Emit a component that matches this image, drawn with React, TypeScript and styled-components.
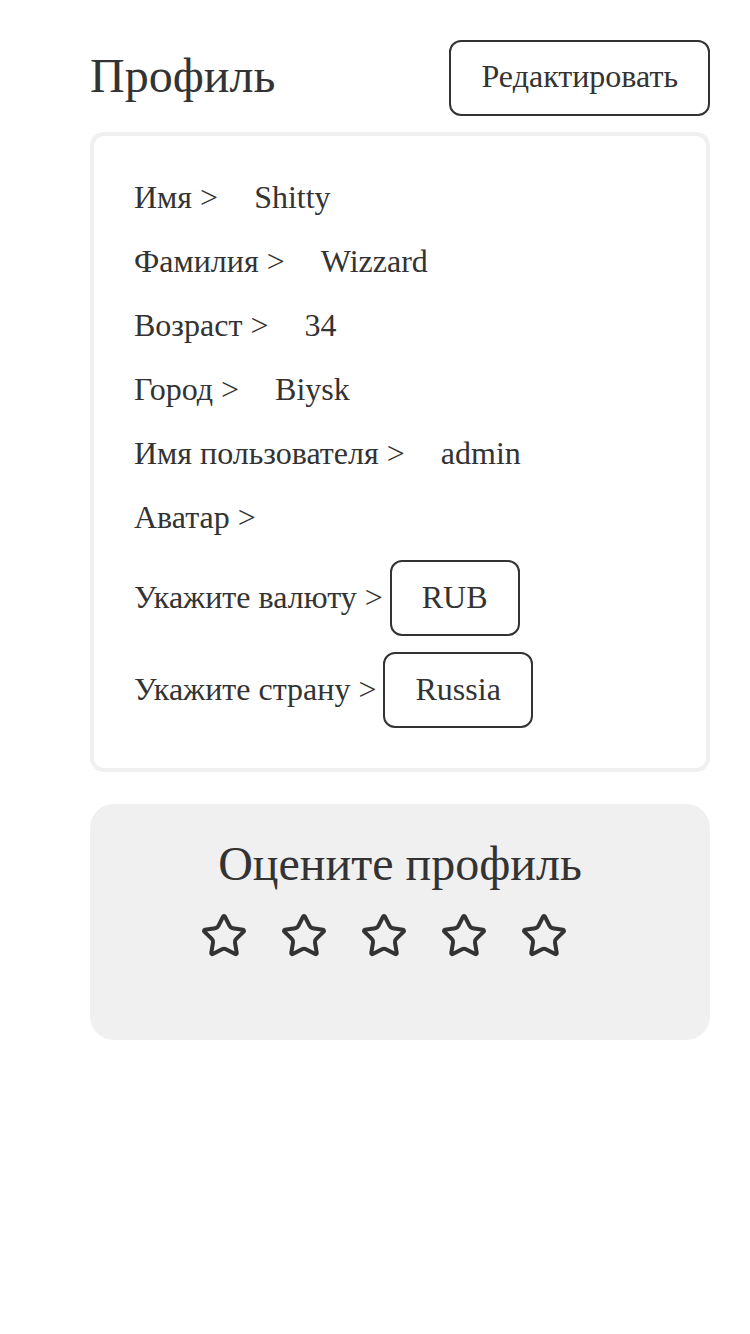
import React from "react";
import styled, { createGlobalStyle } from "styled-components";
import { Star } from "lucide-react";

const GlobalStyle = createGlobalStyle`
  html, body { margin: 0; padding: 0; background: #fff; }
  body { font-family: "Liberation Serif", "Times New Roman", serif; color: #333; }
  * { box-sizing: border-box; }
`;

const Page = styled.div`
  padding: 40px 40px 0 90px;
  display: flex;
  flex-direction: column;
`;

const Header = styled.div`
  display: flex;
  justify-content: space-between;
  align-items: center;
  height: 76px;
  margin-bottom: 16px;
`;

const Title = styled.h1`
  margin: 0;
  font-size: 48px;
  font-weight: 400;
  line-height: 1;
  padding-bottom: 4px;
`;

const OutlineButton = styled.button`
  font-family: inherit;
  font-size: 32px;
  color: #333;
  background: transparent;
  border: 2px solid #333;
  border-radius: 12px;
  height: 76px;
  padding: 0 30px 4px;
  cursor: pointer;
`;

const Card = styled.div`
  border: 4px solid #f0f0f0;
  border-radius: 14px;
  padding: 37px 40px 40px;
  display: flex;
  flex-direction: column;
  gap: 16px;
  margin-bottom: 32px;
`;

const Row = styled.div`
  display: flex;
  align-items: center;
  height: 48px;
  font-size: 32px;
  gap: 36px;
`;

const SelectRow = styled.div<{ $first?: boolean }>`
  display: flex;
  align-items: center;
  font-size: 32px;
  gap: 7px;
  margin-top: ${(p) => (p.$first ? "3px" : "0")};
`;

const Label = styled.span`
  padding-bottom: 2px;
`;

const SelectBox = styled.div`
  height: 76px;
  padding: 0 30px 2px;
  display: flex;
  align-items: center;
  border: 2px solid #333;
  border-radius: 12px;
`;

const RatingCard = styled.div`
  background: #f0f0f0;
  border-radius: 24px;
  padding: 32px 0 80px;
  display: flex;
  flex-direction: column;
  align-items: center;
  gap: 20px;
`;

const RatingTitle = styled.h2`
  margin: 0;
  font-size: 48px;
  font-weight: 400;
  line-height: 56px;
`;

const Stars = styled.div`
  display: flex;
  height: 48px;
`;

const StarButton = styled.span`
  display: flex;
  margin-right: 32px;
  color: #333;
`;

const rows: [string, string][] = [
  ["Имя >", "Shitty"],
  ["Фамилия >", "Wizzard"],
  ["Возраст >", "34"],
  ["Город >", "Biysk"],
  ["Имя пользователя >", "admin"],
  ["Аватар >", ""],
];

export default function App() {
  return (
    <>
      <GlobalStyle />
      <Page>
        <Header>
          <Title>Профиль</Title>
          <OutlineButton>Редактировать</OutlineButton>
        </Header>
        <Card>
          {rows.map(([l, v]) => (
            <Row key={l}>
              <span>{l}</span>
              {v && <span>{v}</span>}
            </Row>
          ))}
          <SelectRow $first>
            <Label>Укажите валюту &gt;</Label>
            <SelectBox>RUB</SelectBox>
          </SelectRow>
          <SelectRow>
            <Label>Укажите страну &gt;</Label>
            <SelectBox>Russia</SelectBox>
          </SelectRow>
        </Card>
        <RatingCard>
          <RatingTitle>Оцените профиль</RatingTitle>
          <Stars>
            {[0, 1, 2, 3, 4].map((i) => (
              <StarButton key={i}>
                <Star size={48} strokeWidth={2} />
              </StarButton>
            ))}
          </Stars>
        </RatingCard>
      </Page>
    </>
  );
}
